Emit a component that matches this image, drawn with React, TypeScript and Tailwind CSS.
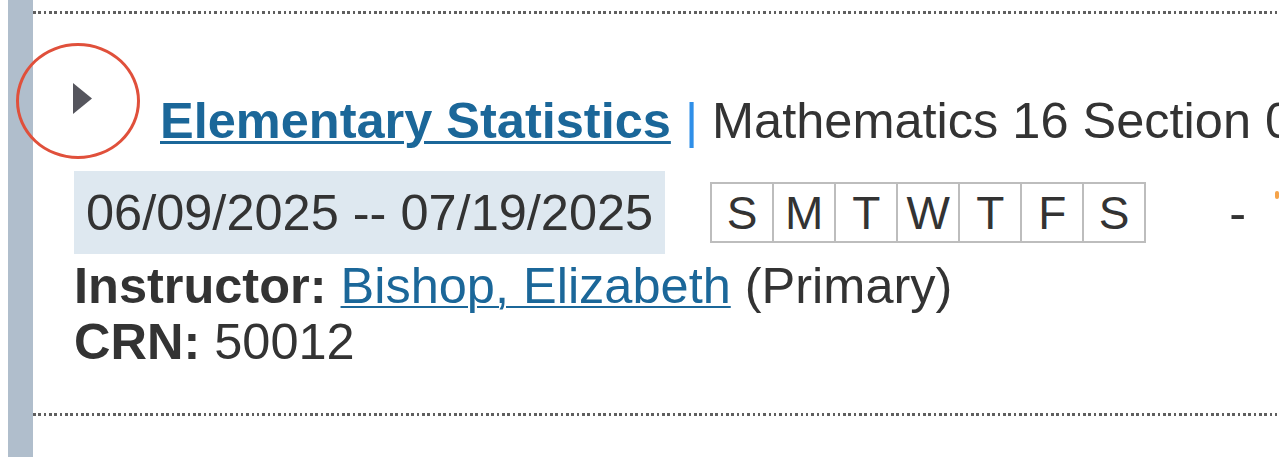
import React from "react";

function Dotted() {
  return (
    <div className="h-[3px] w-full bg-[repeating-linear-gradient(90deg,#5f5f5f_0px,#5f5f5f_2.6px,transparent_2.6px,transparent_5.33px)]" />
  );
}

export default function App() {
  const days = ["S", "M", "T", "W", "T", "F", "S"];
  return (
    <div className="relative w-[1279px] h-[457px] overflow-hidden bg-white flex font-['Liberation_Sans',Arial,sans-serif] text-[#333333]">
      <div className="w-[8px] shrink-0" />
      <div className="w-[25px] shrink-0 bg-[#b0becc]" />
      <div className="flex-1 min-w-0 flex flex-col">
        <div className="mt-[11px]">
          <Dotted />
        </div>
        <div className="pl-[41px] flex flex-col whitespace-nowrap">
          {/* title row */}
          <div className="mt-[69px] flex items-start">
            <svg width="19" height="31" viewBox="0 0 19 31" className="ml-[-1px] shrink-0">
              <polygon points="0,0 19,15.5 0,31" fill="#55555d" />
            </svg>
            <div className="ml-[68px] mt-[10px] text-[50.5px] leading-[56px]">
              <a className="font-bold text-[#1b6799] underline decoration-[3px] underline-offset-[3px] cursor-pointer">
                Elementary Statistics
              </a>{" "}
              <span className="text-[#2f8fe8]">|</span> Mathematics 16 Section 01
            </div>
          </div>
          {/* date row */}
          <div className="mt-[22px] flex items-center text-[50.5px]">
            <div className="h-[83px] px-[12px] bg-[#dee8f0] flex items-center leading-[56px]">
              06/09/2025 -- 07/19/2025
            </div>
            <div className="ml-[45px] flex border-2 border-[#bdbdbd] bg-white">
              {days.map((d, i) => (
                <div
                  key={i}
                  className={`h-[57px] flex items-center justify-center text-[46px] leading-none ${i > 0 ? "w-[62px] border-l-2 border-[#bdbdbd]" : "w-[60px]"}`}
                >
                  {d}
                </div>
              ))}
            </div>
            <span className="ml-[83px] leading-[56px]">-</span>
            <span className="ml-[29px] mt-[-36px] inline-block w-[4px] h-[8px] bg-[#f5a34a] rounded-sm" />
          </div>
          {/* instructor */}
          <div className="mt-[4px] text-[50.5px] leading-[56px]">
            <span className="font-bold">Instructor:</span>{" "}
            <a className="text-[#1b6799] underline decoration-[2px] underline-offset-[3px] cursor-pointer">
              Bishop, Elizabeth
            </a>{" "}
            (Primary)
          </div>
          <div className="text-[50.5px] leading-[56px]">
            <span className="font-bold">CRN:</span> 50012
          </div>
        </div>
        <div className="mt-[43px]">
          <Dotted />
        </div>
      </div>
      <div className="absolute left-[16px] top-[43px] w-[124px] h-[116px] rounded-[50%] border-[3px] border-[#e0503b]" />
    </div>
  );
}
